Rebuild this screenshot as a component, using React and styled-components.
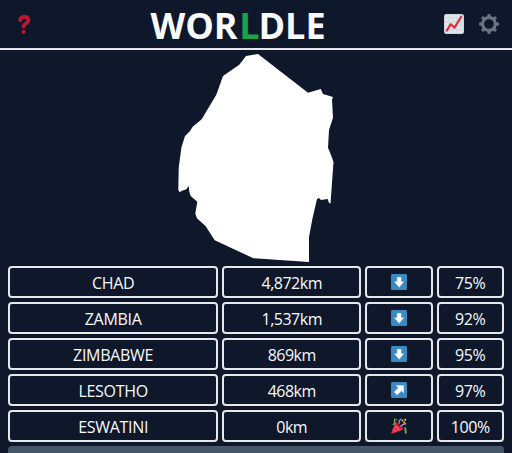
import React from "react";
import styled, { createGlobalStyle } from "styled-components";

const GlobalStyle = createGlobalStyle`
  * { box-sizing: border-box; }
  body {
    margin: 0;
    background: #0f172a;
    color: #f8fafc;
    font-family: "Open Sans", "Noto Sans", sans-serif;
    overflow: hidden;
  }
`;

const Page = styled.div`
  display: flex;
  flex-direction: column;
  height: 453px;
  overflow: hidden;
`;

const Header = styled.header`
  display: flex;
  align-items: center;
  flex: none;
  height: 50px;
  padding: 0 13px 0 12px;
  border-bottom: 2px solid #e5e7eb;
`;

const HeaderStart = styled.div`
  display: flex;
  flex: 1;
`;

const HeaderEnd = styled.div`
  display: flex;
  flex: 1;
  gap: 15px;
  justify-content: flex-end;
  padding-left: 35px;
`;

const IconButton = styled.button`
  display: flex;
  padding: 0;
  border: 0;
  background: none;
  svg { display: block; }
`;

const Title = styled.h1`
  margin: 3px 0 0;
  font-size: 36px;
  line-height: 40px;
  font-weight: 700;
`;

const Accent = styled.span`
  margin: 0 -1px 0 1.5px;
  color: #16a34a;
`;

const Country = styled.div`
  display: flex;
  justify-content: center;
  flex: none;
  height: 216px;
  svg { display: block; }
`;

const Guesses = styled.div`
  display: grid;
  grid-template-columns: repeat(7, minmax(0, 1fr));
  grid-auto-rows: 32px;
  gap: 4px;
  padding: 0 8px;
`;

const Cell = styled.div`
  display: flex;
  align-items: center;
  justify-content: center;
  grid-column: span ${(p) => p.$span || 1};
  border: 2px solid #e5e7eb;
  border-radius: 4px;
  padding-top: ${(p) => (p.$icon ? 0 : 2)}px;
  font-size: 16px;
  line-height: 24px;
  letter-spacing: ${(p) => p.$tracking || 0}px;
  svg { display: block; }
`;

const ShareButton = styled.button`
  grid-column: 1 / -1;
  border: 0;
  border-radius: 4px;
  background: #475569;
`;

const QuestionIcon = () => (
  <svg width="24" height="24" viewBox="0 0 24 24" fill="none">
    <path d="M8.100 8.200C8.400 5.600 10.200 4.900 12.200 4.900c2.400 0 4.200 1.200 4.200 3.400 0 3.300-4.700 2.900-4.700 6.200" stroke="#be1931" strokeWidth="3.700" strokeLinecap="round" />
    <circle cx="11.600" cy="19.800" r="2" fill="#be1931" />
  </svg>
);

const ChartIcon = () => (
  <svg width="20" height="20" viewBox="0 0 36 36">
    <rect width="36" height="36" rx="4" fill="#ccd6dd" />
    <rect x="2" y="2" width="32" height="32" rx="2" fill="#e1e8ed" />
    <path d="M9 2v32M16 2v32M23 2v32M30 2v32M2 7h32M2 14h32M2 21h32M2 28h32" stroke="#ccd6dd" strokeWidth="1.500" />
    <path d="M5 30L12 18.500 19 24.500 31 5" fill="none" stroke="#dd2e44" strokeWidth="4" strokeLinecap="round" strokeLinejoin="round" />
  </svg>
);

const teeth = [0, 45, 90, 135, 180, 225, 270, 315];

const GearIcon = () => (
  <svg width="20" height="20" viewBox="0 0 36 36">
    <circle cx="18" cy="18" r="11.500" fill="none" stroke="#66757f" strokeWidth="5.600" />
    {teeth.map((a) => (
      <path key={a} d="M14.400 6.500l1-5.500q.2-1 1.200-1h2.800q1 0 1.200 1l1 5.500z" fill="#66757f" transform={`rotate(${a} 18 18)`} />
    ))}
  </svg>
);

const arrowShapes = {
  down: "M13.800 7.500h9V17.500H28.800L18.300 30 7.800 17.500h6z",
  upRight: "M11.500 8H28.500V25L23.300 19.800 14 29.500 7 22.500 16.700 13.200z",
};

const ArrowIcon = ({ direction }) => (
  <svg width="16" height="16" viewBox="0 0 36 36">
    <rect width="36" height="36" rx="3" fill="#3b88c3" />
    <path d={arrowShapes[direction]} fill="#fff" stroke="#fff" strokeWidth="0.600" strokeLinejoin="round" />
  </svg>
);

const PartyIcon = () => (
  <svg width="16" height="16" viewBox="0 0 36 36">
    <path d="M10 9C16 12 27 21 28 25c-5 4-20 9-26 10C0 35 0 34 1 32z" fill="#dd2e44" />
    <path d="M5 24l6 7M8 17l11 11" stroke="#ea596e" strokeWidth="3" />
    <path d="M12 10c6 1 15 8 15 14-5-1-14-9-15-14z" fill="#a0041e" />
    <path d="M4 15c5-4 7-1 4-6-2-3 2-4 0-8" fill="none" stroke="#77b255" strokeWidth="3" />
    <path d="M17 13c4-4-1-5 2-8 2-2 4 1 4-4" fill="none" stroke="#aa8dd8" strokeWidth="3" />
    <path d="M22 20c2-5 6-7 12-7" fill="none" stroke="#aa8dd8" strokeWidth="3" />
    <path d="M30 23c5-1 1 7 4 12" fill="none" stroke="#77b255" strokeWidth="4" />
    <circle cx="26" cy="6" r="2" fill="#ffcc4d" />
    <circle cx="32" cy="4" r="2.300" fill="#ffcc4d" />
    <circle cx="30" cy="10" r="2" fill="#ffcc4d" />
    <circle cx="12" cy="4" r="2" fill="#5c913b" />
  </svg>
);

const outline =
  "258,54 246,56 239.3,64.7 223,76 216.3,94.7 201.7,119.3 192.7,126.7 190,131 185,136 181.5,147 180,158 178.7,168 178.3,190 179.7,192.3 182,190.7 186,189.4 188.800,186 189.300,192 190.700,196 197.300,201.700 195.300,213.700 197,218.300 205.700,226.300 214.700,240.300 253.500,258.300 309,262 309,237.300 312.300,219.300 317,199 319,198 321,200 327.700,199 329,203 330.500,203.500 333.500,162 331,155 328,147.700 329,130 333,117.700 332,99.700 333,97 323,94 320.700,89 308,92.700";

const guesses = [
  { name: "CHAD", distance: "4,872km", direction: "down", percent: "75%" },
  { name: "ZAMBIA", distance: "1,537km", direction: "down", percent: "92%" },
  { name: "ZIMBABWE", distance: "869km", direction: "down", percent: "95%" },
  { name: "LESOTHO", distance: "468km", direction: "upRight", percent: "97%" },
  { name: "ESWATINI", distance: "0km", percent: "100%" },
];

export default function App() {
  return (
    <Page>
      <GlobalStyle />
      <Header>
        <HeaderStart>
          <IconButton aria-label="Help"><QuestionIcon /></IconButton>
        </HeaderStart>
        <Title>WOR<Accent>L</Accent>DLE</Title>
        <HeaderEnd>
          <IconButton aria-label="Statistics"><ChartIcon /></IconButton>
          <IconButton aria-label="Settings"><GearIcon /></IconButton>
        </HeaderEnd>
      </Header>
      <Country>
        <svg width="160" height="216" viewBox="176 50 160 216">
          <polygon points={outline} fill="#fff" />
        </svg>
      </Country>
      <Guesses>
        {guesses.map((g) => (
          <React.Fragment key={g.name}>
            <Cell $span={3} $tracking={-0.3}>{g.name}</Cell>
            <Cell $span={2} $tracking={-0.5}>{g.distance}</Cell>
            <Cell $icon>{g.direction ? <ArrowIcon direction={g.direction} /> : <PartyIcon />}</Cell>
            <Cell $tracking={-0.4}>{g.percent}</Cell>
          </React.Fragment>
        ))}
        <ShareButton aria-label="Share" />
      </Guesses>
    </Page>
  );
}
